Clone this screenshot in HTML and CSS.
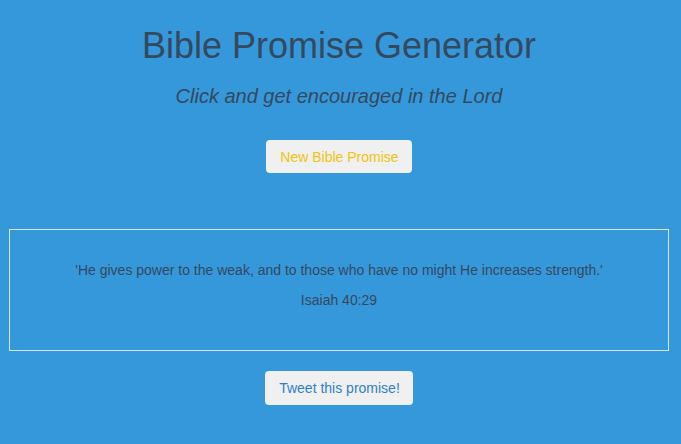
FILE: index.html
```html
<!DOCTYPE html>
<html>
<head>
<meta charset="utf-8">
<link rel="stylesheet" href="styles.css">
</head>
<body>
<div class="page">
  <h1 class="title">Bible Promise Generator</h1>
  <h2 class="subtitle">Click and get encouraged in the Lord</h2>
  <div class="btn-row"><button class="btn btn-new">New Bible Promise</button></div>
  <div class="quote-box">
    <p class="quote">'He gives power to the weak, and to those who have no might He increases strength.'</p>
    <p class="ref">Isaiah 40:29</p>
  </div>
  <div class="btn-row"><button class="btn btn-tweet">Tweet this promise!</button></div>
</div>
</body>
</html>
```
FILE: styles.css
```css
html, body {
  margin: 0;
  padding: 0;
  background: #3498db;
  height: 100%;
  overflow: hidden;
}
body {
  font-family: "Liberation Sans", Arial, sans-serif;
  color: #34495e;
}
.page {
  padding: 0 12px 0 9px;
  display: flex;
  flex-direction: column;
  align-items: stretch;
}
.title {
  margin: 26px 0 0;
  font-size: 36px;
  font-weight: normal;
  text-align: center;
  line-height: 40px;
}
.subtitle {
  margin: 18px 0 0;
  font-size: 20px;
  font-style: italic;
  font-weight: normal;
  text-align: center;
  line-height: 24px;
}
.btn-row {
  display: flex;
  justify-content: center;
}
.btn {
  font-family: "Liberation Sans", Arial, sans-serif;
  font-size: 14px;
  background: #f0f0f0;
  border: none;
  border-radius: 4px;
  height: 33px;
  padding: 0 13px 0 14px;
}
.btn-new {
  margin-top: 32px;
  color: #f1c40f;
}
.quote-box {
  margin-top: 56px;
  border: 1px solid #d6e9f8;
  height: 122px;
  box-sizing: border-box;
  display: flex;
  flex-direction: column;
  align-items: center;
  padding-top: 32px;
}
.quote {
  margin: 0;
  font-size: 14px;
  line-height: 16px;
}
.ref {
  margin: 14px 0 0;
  font-size: 14px;
  line-height: 16px;
}
.btn-tweet {
  margin-top: 20px;
  height: 34px;
  color: #2f80c9;
  font-size: 14px;
}
```
